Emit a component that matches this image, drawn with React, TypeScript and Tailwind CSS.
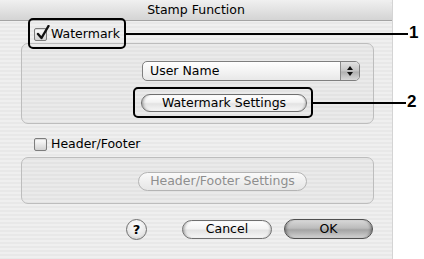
import React from "react";

const font = { fontFamily: '"DejaVu Sans", "Liberation Sans", sans-serif' };

function CheckBox({ checked }: { checked?: boolean }) {
  return (
    <div className="relative w-[13px] h-[13px] shrink-0 rounded-[2px] border border-[#7d7d7d] bg-[linear-gradient(180deg,#ffffff_0%,#e6e6e6_55%,#d2d2d2_100%)] shadow-[inset_0_1px_1px_rgba(0,0,0,0.15)]">
      {checked && (
        <svg className="absolute left-[1px] top-[-4px]" width="14" height="15" viewBox="0 0 14 15">
          <path d="M2 9 L5.5 13 L12.5 1" fill="none" stroke="#111" strokeWidth="2.4" strokeLinecap="round" strokeLinejoin="round" />
        </svg>
      )}
    </div>
  );
}

function Pill({ children, className, disabled }: { children: React.ReactNode; className: string; disabled?: boolean }) {
  return (
    <div
      className={
        "flex items-center justify-center rounded-full border text-[12.5px] " +
        (disabled
          ? "border-[#b4b4b4] text-[#8e8e8e] bg-[linear-gradient(180deg,#fafafa_0%,#efefef_50%,#e6e6e6_100%)] "
          : "border-[#6f6f6f] text-black bg-[linear-gradient(180deg,#ffffff_0%,#f3f3f3_45%,#e3e3e3_55%,#f6f6f6_100%)] shadow-[inset_3px_0_3px_-2px_rgba(0,0,0,0.35),inset_-2px_0_2px_-1px_rgba(0,0,0,0.2)] ") +
        className
      }
    >
      {children}
    </div>
  );
}

export default function App() {
  return (
    <div className="relative w-[424px] h-[259px] bg-white overflow-hidden flex" style={font}>
      <div className="w-[393px] h-[259px] flex flex-col bg-[image:repeating-linear-gradient(180deg,#efefef_0px,#efefef_2px,#e8e8e8_2px,#e8e8e8_4px)] border-r border-[#d4d4d4]">
        <div className="h-[21px] shrink-0 flex items-center justify-center rounded-tr-[8px] border-b border-[#a3a3a3] bg-[linear-gradient(180deg,#f0f0f0_0%,#e2e2e2_50%,#d4d4d4_100%)] text-[12.5px] text-black">
          Stamp Function
        </div>
        <div className="flex flex-col pl-[21px] pr-[18px]">
          <div className="mt-[4px] h-[18px] flex items-center gap-[4px] pl-[13px] text-[12.5px] text-black">
            <CheckBox checked />
            <span>Watermark</span>
          </div>
          <div className="h-[81px] rounded-[7px] border border-[#bdbdbd] bg-[rgba(0,0,0,0.02)] flex flex-col">
            <div className="mt-[17px] ml-[120px] w-[218px] h-[20px] flex rounded-[5px] border border-[#7f7f7f] overflow-hidden bg-[linear-gradient(180deg,#ffffff_0%,#f4f4f4_50%,#e8e8e8_100%)]">
              <div className="flex-1 flex items-center pl-[7px] text-[12.5px] text-black">User Name</div>
              <div className="w-[19px] border-l border-[#8a8a8a] bg-[linear-gradient(180deg,#e2e2e2_0%,#c4c4c4_50%,#b0b0b0_55%,#d8d8d8_100%)] flex flex-col items-center justify-center gap-[2px]">
                <svg width="6" height="4" viewBox="0 0 6 4"><path d="M3 0 L6 4 L0 4 Z" fill="#111" /></svg>
                <svg width="6" height="4" viewBox="0 0 6 4"><path d="M0 0 L6 0 L3 4 Z" fill="#111" /></svg>
              </div>
            </div>
            <Pill className="mt-[13px] ml-[119px] w-[166px] h-[18px]">Watermark Settings</Pill>
          </div>
          <div className="mt-[11px] mb-[3px] h-[19px] flex items-center gap-[4px] pl-[13px] text-[12.5px] text-black">
            <CheckBox />
            <span>Header/Footer</span>
          </div>
          <div className="h-[47px] rounded-[7px] border border-[#bdbdbd] bg-[rgba(0,0,0,0.02)] flex flex-col">
            <Pill disabled className="mt-[14px] ml-[116px] w-[169px] h-[19px]">Header/Footer Settings</Pill>
          </div>
        </div>
        <div className="mt-[15px] flex items-start">
          <div className="ml-[126px] w-[21px] h-[21px] rounded-full border border-[#6f6f6f] bg-[radial-gradient(circle_at_50%_30%,#ffffff_0%,#e8e8e8_60%,#c4c4c4_100%)] flex items-center justify-center text-[13px] font-bold text-black">
            ?
          </div>
          <Pill className="ml-[35px] mt-[1px] w-[90px] h-[19px]">Cancel</Pill>
          <div className="ml-[12px] w-[89px] h-[20px] rounded-full border border-[#4f4f4f] flex items-center justify-center text-[12.5px] text-black bg-[linear-gradient(180deg,#d8d8d8_0%,#bcbcbc_45%,#a4a4a4_55%,#d2d2d2_100%)] shadow-[inset_3px_0_3px_-2px_rgba(0,0,0,0.4),inset_-3px_0_3px_-2px_rgba(0,0,0,0.4)]">
            OK
          </div>
        </div>
      </div>

      {/* Callout annotations */}
      <div className="absolute left-[28px] top-[18px] w-[98px] h-[31px] rounded-[5px] border-2 border-black" />
      <div className="absolute left-[126px] top-[33px] w-[282px] h-[2px] bg-black" />
      <div className="absolute left-[409px] top-[24px] text-[17px] font-bold leading-[17px] text-black" style={{ fontFamily: '"Liberation Sans", Arial, sans-serif' }}>1</div>

      <div className="absolute left-[133px] top-[87px] w-[180px] h-[31px] rounded-[5px] border-2 border-black" />
      <div className="absolute left-[313px] top-[102px] w-[93px] h-[2px] bg-black" />
      <div className="absolute left-[407px] top-[93px] text-[17px] font-bold leading-[17px] text-black" style={{ fontFamily: '"Liberation Sans", Arial, sans-serif' }}>2</div>
    </div>
  );
}
